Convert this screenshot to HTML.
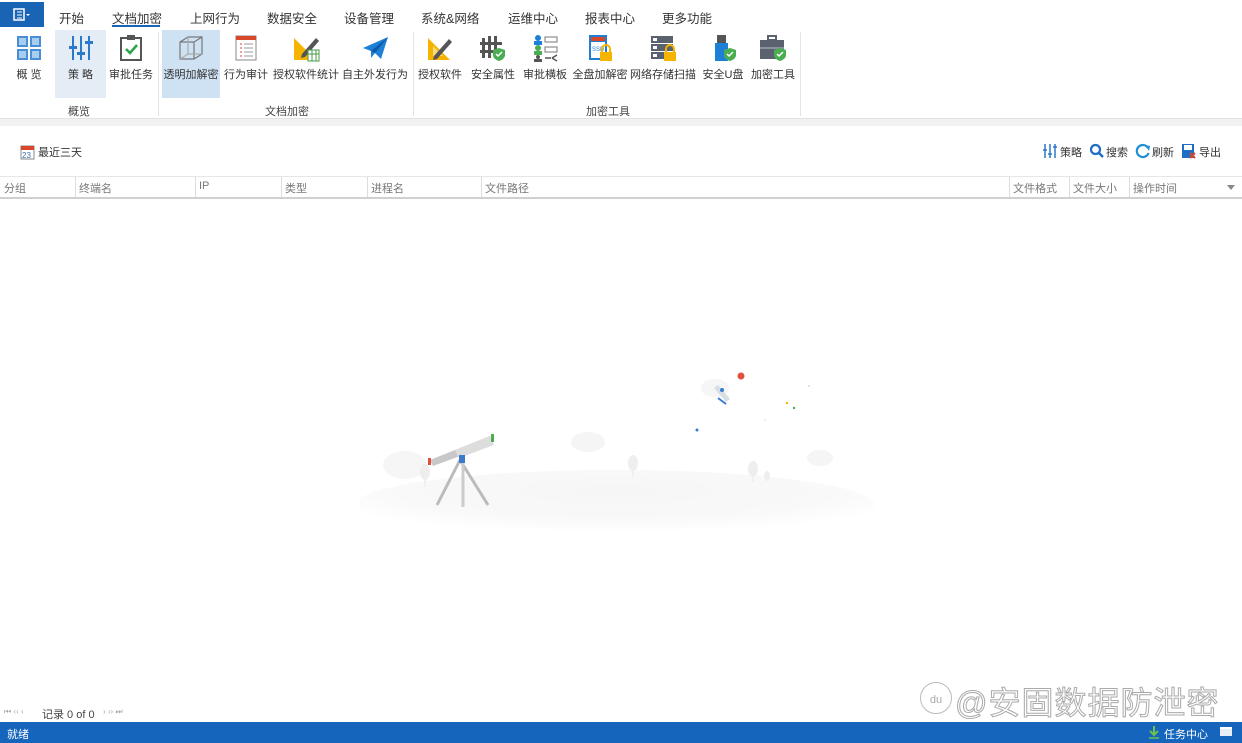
<!DOCTYPE html>
<html><head><meta charset="utf-8"><style>
*{margin:0;padding:0;box-sizing:border-box}
body{width:1242px;height:743px;position:relative;background:#fff;font-family:"Liberation Sans","Noto Sans CJK SC",sans-serif;font-size:12px;color:#333;overflow:hidden}
.a{position:absolute;white-space:nowrap}
.tab{position:absolute;top:8px;font-size:12.5px;color:#333}
.it{position:absolute;top:30px;height:68px;text-align:center;font-size:11px;color:#333}
.it svg{position:absolute;top:4px;left:50%;margin-left:-14px}
.it span{position:absolute;top:36px;left:0;right:0;text-align:center}
.sep{position:absolute;top:32px;width:1px;height:84px;background:#e3e3e3}
.gl{position:absolute;top:103px;font-size:11px;color:#444}
.col{position:absolute;top:180px;font-size:11px;color:#777}
.cs{position:absolute;top:177px;width:1px;height:20px;background:#ddd}
</style></head><body>
<div class="a" style="left:0;top:2px;width:44px;height:25px;background:#1a64b6"></div>
<svg class="a" style="left:13px;top:8px" width="18" height="14"><rect x="1" y="1" width="10" height="11" fill="none" stroke="#fff" stroke-width="1.5"/><line x1="4" y1="4" x2="9" y2="4" stroke="#fff"/><line x1="4" y1="7" x2="9" y2="7" stroke="#fff"/><line x1="4" y1="10" x2="9" y2="10" stroke="#fff"/><path d="M13 6l2 2 2-2" fill="#fff"/></svg>
<div class="tab" style="left:59px">开始</div>
<div class="tab" style="left:112px">文档加密</div>
<div class="a" style="left:112px;top:25px;width:48px;height:2px;background:#1a64b6"></div>
<div class="tab" style="left:190px">上网行为</div>
<div class="tab" style="left:267px">数据安全</div>
<div class="tab" style="left:344px">设备管理</div>
<div class="tab" style="left:421px">系统&amp;网络</div>
<div class="tab" style="left:508px">运维中心</div>
<div class="tab" style="left:585px">报表中心</div>
<div class="tab" style="left:662px">更多功能</div>
<div class="a" style="left:55px;top:30px;width:51px;height:68px;background:#e4edf6"></div>
<div class="a" style="left:162px;top:30px;width:58px;height:68px;background:#cfe2f4"></div>
<div class="it" style="left:4px;width:50px"><svg width="28" height="28"><g fill="#4a8fd6"><rect x="2" y="2" width="11" height="11"/><rect x="15" y="2" width="11" height="11"/><rect x="2" y="15" width="11" height="11"/><rect x="15" y="15" width="11" height="11"/></g><g fill="#a9cdef"><rect x="4" y="4" width="7" height="7"/><rect x="17" y="4" width="7" height="7"/><rect x="4" y="17" width="7" height="7"/><rect x="17" y="17" width="7" height="7"/></g></svg><span>概 览</span></div>
<div class="it" style="left:55px;width:51px"><svg width="28" height="28"><g stroke="#2a78c8" stroke-width="2"><line x1="6" y1="2" x2="6" y2="26"/><line x1="14" y1="2" x2="14" y2="26"/><line x1="22" y1="2" x2="22" y2="26"/></g><g fill="#2a78c8"><rect x="2" y="12" width="8" height="3"/><rect x="10" y="18" width="8" height="3"/><rect x="18" y="7" width="8" height="3"/></g></svg><span>策 略</span></div>
<div class="it" style="left:106px;width:50px"><svg width="28" height="28"><rect x="4" y="4" width="20" height="22" fill="none" stroke="#555" stroke-width="2"/><rect x="10" y="1" width="8" height="5" fill="#555"/><path d="M9 15l4 4 7-8" fill="none" stroke="#2aa44a" stroke-width="2.5"/></svg><span>审批任务</span></div>
<div class="sep" style="left:158px"></div>
<div class="it" style="left:162px;width:58px"><svg width="28" height="28"><g fill="none" stroke="#777" stroke-width="1.2"><path d="M3 8l8-5h14v17l-8 5H3z"/><path d="M3 8h14v17M17 8l8-5"/><path d="M3 25l8-5h14M11 3v17" stroke="#aaa"/></g></svg><span>透明加解密</span></div>
<div class="it" style="left:222px;width:48px"><svg width="28" height="28"><rect x="4" y="2" width="20" height="24" fill="#fff" stroke="#888"/><rect x="4" y="2" width="20" height="4" fill="#d9472b"/><g stroke="#d9472b"><line x1="8" y1="10" x2="10" y2="10"/><line x1="8" y1="14" x2="10" y2="14"/><line x1="8" y1="18" x2="10" y2="18"/><line x1="8" y1="22" x2="10" y2="22"/></g><g stroke="#999"><line x1="12" y1="10" x2="21" y2="10"/><line x1="12" y1="14" x2="21" y2="14"/><line x1="12" y1="18" x2="21" y2="18"/><line x1="12" y1="22" x2="21" y2="22"/></g></svg><span>行为审计</span></div>
<div class="it" style="left:272px;width:68px"><svg width="28" height="28"><path d="M2 4v22h22z" fill="#f5b400"/><path d="M10 20l14-16 3 3-14 16-4 1z" fill="#555"/><rect x="16" y="16" width="11" height="11" fill="#fff" stroke="#4a9a4a"/><path d="M16 20h11M20 16v11M24 16v11" stroke="#4a9a4a"/></svg><span>授权软件统计</span></div>
<div class="it" style="left:342px;width:66px"><svg width="28" height="28"><path d="M2 14L27 3 20 25l-6-6-4 5v-7z" fill="#1e7fd6"/><path d="M10 17L27 3 14 19" fill="#0d5aa8"/></svg><span>自主外发行为</span></div>
<div class="sep" style="left:413px"></div>
<div class="it" style="left:416px;width:48px"><svg width="28" height="28"><path d="M2 4v22h22z" fill="#f5b400"/><path d="M7 12v10h10z" fill="#fff" opacity=".5"/><path d="M8 22l15-17 3 3-15 17-4 1z" fill="#555"/></svg><span>授权软件</span></div>
<div class="it" style="left:468px;width:50px"><svg width="28" height="28"><g fill="#555"><rect x="3" y="4" width="3" height="20"/><rect x="9" y="2" width="3" height="22"/><rect x="15" y="2" width="3" height="22"/><rect x="1" y="8" width="22" height="3"/><rect x="1" y="16" width="22" height="3"/></g><path d="M20 14l6 2v5c0 3-3 5-6 6-3-1-6-3-6-6v-5z" fill="#4aad52"/><path d="M17 20l2 2 4-4" stroke="#fff" fill="none" stroke-width="1.5"/></svg><span>安全属性</span></div>
<div class="it" style="left:521px;width:48px"><svg width="28" height="28"><circle cx="7" cy="4" r="3" fill="#1e7fd6"/><rect x="3" y="7" width="8" height="4" fill="#1e7fd6"/><circle cx="7" cy="14" r="3" fill="#4aad52"/><rect x="3" y="17" width="8" height="4" fill="#4aad52"/><circle cx="7" cy="23" r="2" fill="#555"/><rect x="3" y="25" width="8" height="3" fill="#555"/><g fill="none" stroke="#777"><rect x="14" y="3" width="12" height="5"/><rect x="14" y="13" width="12" height="5"/></g><path d="M14 24h6M21 24l5-3M21 24l5 3" stroke="#555" stroke-width="1.5"/></svg><span>审批横板</span></div>
<div class="it" style="left:572px;width:56px"><svg width="28" height="28"><rect x="3" y="1" width="18" height="25" fill="#1e7fd6"/><rect x="5" y="3" width="14" height="4" fill="#d9472b"/><rect x="5" y="8" width="14" height="16" fill="#fff"/><text x="6" y="17" font-size="6" fill="#1e7fd6" font-family="Liberation Sans">SSD</text><rect x="14" y="18" width="12" height="9" fill="#f5b400"/><path d="M16 18v-3a4 4 0 018 0v3" fill="none" stroke="#f5b400" stroke-width="2"/></svg><span>全盘加解密</span></div>
<div class="it" style="left:630px;width:66px"><svg width="28" height="28"><g fill="#5a6270"><rect x="2" y="2" width="22" height="7"/><rect x="2" y="10" width="22" height="7"/><rect x="2" y="18" width="22" height="7"/></g><g fill="#fff"><rect x="4" y="4" width="4" height="3"/><rect x="4" y="12" width="4" height="3"/><rect x="4" y="20" width="4" height="3"/></g><rect x="15" y="18" width="12" height="9" fill="#f5b400"/><path d="M17 18v-3a4 4 0 018 0v3" fill="none" stroke="#f5b400" stroke-width="2"/></svg><span>网络存储扫描</span></div>
<div class="it" style="left:700px;width:46px"><svg width="28" height="28"><rect x="8" y="1" width="9" height="8" fill="#555"/><rect x="6" y="9" width="13" height="18" fill="#1e7fd6"/><path d="M21 14l6 2v5c0 3-3 5-6 6-3-1-6-3-6-6v-5z" fill="#4aad52"/><path d="M18 20l2 2 4-4" stroke="#fff" fill="none" stroke-width="1.5"/></svg><span>安全U盘</span></div>
<div class="it" style="left:749px;width:48px"><svg width="28" height="28"><rect x="9" y="2" width="8" height="4" fill="none" stroke="#5a6270" stroke-width="2"/><rect x="1" y="6" width="24" height="19" fill="#5a6270"/><rect x="1" y="13" width="24" height="2" fill="#8a919c"/><path d="M21 14l6 2v5c0 3-3 5-6 6-3-1-6-3-6-6v-5z" fill="#4aad52"/><path d="M18 20l2 2 4-4" stroke="#fff" fill="none" stroke-width="1.5"/></svg><span>加密工具</span></div>
<div class="sep" style="left:800px"></div>
<div class="gl" style="left:68px">概览</div>
<div class="gl" style="left:265px">文档加密</div>
<div class="gl" style="left:586px">加密工具</div>
<div class="a" style="left:0;top:118px;width:1242px;height:8px;background:#f2f2f2;border-top:1px solid #e2e2e2"></div>
<svg class="a" style="left:20px;top:144px" width="16" height="16"><rect x="1" y="2" width="13" height="13" fill="#fff" stroke="#888"/><rect x="1" y="2" width="13" height="4" fill="#d9472b"/><text x="2" y="14" font-size="8" fill="#3a6fb0" font-family="Liberation Sans">23</text></svg>
<div class="a" style="left:38px;top:144px;font-size:11px">最近三天</div>
<svg class="a" style="left:1042px;top:143px" width="16" height="16"><g stroke="#2a78c8" stroke-width="1.5"><line x1="3" y1="1" x2="3" y2="15"/><line x1="8" y1="1" x2="8" y2="15"/><line x1="13" y1="1" x2="13" y2="15"/><line x1="1" y1="7" x2="5" y2="7"/><line x1="6" y1="11" x2="10" y2="11"/><line x1="11" y1="4" x2="15" y2="4"/></g></svg>
<div class="a" style="left:1060px;top:144px;font-size:11px">策略</div>
<svg class="a" style="left:1089px;top:143px" width="16" height="16"><circle cx="6.5" cy="6.5" r="4.5" fill="none" stroke="#1e6fc4" stroke-width="2.2"/><line x1="10" y1="10" x2="14" y2="14" stroke="#1e6fc4" stroke-width="2.5"/></svg>
<div class="a" style="left:1106px;top:144px;font-size:11px">搜索</div>
<svg class="a" style="left:1135px;top:143px" width="16" height="16"><path d="M13 5A6 6 0 1 0 13.5 10" fill="none" stroke="#1e90d6" stroke-width="2.2"/><path d="M10 2l5 1-1 5z" fill="#1e90d6"/></svg>
<div class="a" style="left:1152px;top:144px;font-size:11px">刷新</div>
<svg class="a" style="left:1181px;top:143px" width="16" height="16"><rect x="1" y="1" width="12" height="14" fill="#1e6fc4"/><rect x="3" y="2" width="8" height="5" fill="#fff"/><path d="M9 10l5 5M9 15l5-5" stroke="#d9472b" stroke-width="2"/></svg>
<div class="a" style="left:1199px;top:144px;font-size:11px">导出</div>
<div class="a" style="left:0;top:176px;width:1242px;height:1px;background:#e6e6e6"></div>
<div class="a" style="left:0;top:197px;width:1242px;height:2px;background:#d0d0d0"></div>
<div class="col" style="left:4px">分组</div>
<div class="cs" style="left:75px"></div><div class="col" style="left:79px">终端名</div>
<div class="cs" style="left:195px"></div><div class="col" style="left:199px">IP</div>
<div class="cs" style="left:281px"></div><div class="col" style="left:285px">类型</div>
<div class="cs" style="left:367px"></div><div class="col" style="left:371px">进程名</div>
<div class="cs" style="left:481px"></div><div class="col" style="left:485px">文件路径</div>
<div class="cs" style="left:1009px"></div><div class="col" style="left:1013px">文件格式</div>
<div class="cs" style="left:1069px"></div><div class="col" style="left:1073px">文件大小</div>
<div class="cs" style="left:1129px"></div><div class="col" style="left:1133px">操作时间</div>
<div class="a" style="left:1227px;top:185px;border:4px solid transparent;border-top:5px solid #888"></div>
<svg class="a" style="left:360px;top:360px" width="520" height="170">
<defs><radialGradient id="g" cx="50%" cy="30%" r="60%"><stop offset="0" stop-color="#f6f6f6"/><stop offset="0.7" stop-color="#f9f9f9"/><stop offset="1" stop-color="#fff"/></radialGradient></defs>
<ellipse cx="255" cy="145" rx="260" ry="35" fill="url(#g)"/>
<ellipse cx="45" cy="105" rx="22" ry="14" fill="#f6f6f6"/>
<ellipse cx="228" cy="82" rx="17" ry="10" fill="#f5f5f5"/>
<ellipse cx="460" cy="98" rx="13" ry="8" fill="#f5f5f5"/>
<ellipse cx="355" cy="28" rx="14" ry="9" fill="#f6f6f6"/>
<ellipse cx="65" cy="112" rx="5" ry="8" fill="#eee"/><line x1="65" y1="118" x2="65" y2="127" stroke="#eee" stroke-width="1.5"/>
<ellipse cx="273" cy="103" rx="5" ry="8" fill="#eee"/><line x1="273" y1="108" x2="273" y2="117" stroke="#eee" stroke-width="1.5"/>
<ellipse cx="393" cy="109" rx="5" ry="8" fill="#eee"/><line x1="393" y1="114" x2="393" y2="122" stroke="#eee" stroke-width="1.5"/>
<ellipse cx="407" cy="116" rx="3" ry="5" fill="#eee"/>
<g stroke="#bbb" stroke-width="3"><line x1="100" y1="100" x2="77" y2="145"/><line x1="100" y1="100" x2="128" y2="145"/><line x1="103" y1="100" x2="103" y2="147" stroke="#ccc"/></g>
<path d="M70 100l60-24 3 8-60 22z" fill="#c8c8c8"/>
<path d="M95 90l35-14 4 9-35 13z" fill="#ddd"/>
<rect x="99" y="95" width="6" height="8" fill="#3a7bd0"/>
<rect x="68" y="98" width="3" height="7" fill="#e0503a"/>
<rect x="131" y="74" width="3" height="8" fill="#4aad52"/>
<circle cx="381" cy="16" r="3.5" fill="#e0503a"/>
<path d="M358 25l12 14-4 3-12-14z" fill="#d8dde6"/><circle cx="362" cy="30" r="2" fill="#3a7bd0"/>
<line x1="358" y1="38" x2="366" y2="44" stroke="#3a7bd0" stroke-width="2"/>
<circle cx="337" cy="70" r="1.5" fill="#3a7bd0"/><circle cx="434" cy="48" r="1.2" fill="#4aad52"/><circle cx="427" cy="43" r="1.2" fill="#f5b400"/><circle cx="405" cy="60" r="1.2" fill="#eee"/><circle cx="449" cy="26" r="1" fill="#ddd"/>
</svg>
<div class="a" style="left:920px;top:682px;width:32px;height:32px;border:1px solid #bbb;border-radius:50%;font-size:11px;color:#aaa;text-align:center;line-height:34px">du</div>
<div class="a" style="left:955px;top:678px;font-size:32px;color:#fff;-webkit-text-stroke:1px #aaa;letter-spacing:1px">@安固数据防泄密</div>
<div class="a" style="left:4px;top:707px;font-size:8px;color:#aaa">⏮ ‹‹ ‹</div>
<div class="a" style="left:42px;top:706px;font-size:11px;color:#444">记录 0 of 0</div>
<div class="a" style="left:103px;top:707px;font-size:8px;color:#aaa">› ›› ⏭</div>
<div class="a" style="left:0;top:722px;width:1242px;height:21px;background:#1565bd"></div>
<div class="a" style="left:7px;top:726px;font-size:11px;color:#fff">就绪</div>
<svg class="a" style="left:1148px;top:725px" width="12" height="14"><path d="M6 1v9M2 6l4 4 4-4" stroke="#6cc24a" stroke-width="2" fill="none"/><line x1="1" y1="13" x2="11" y2="13" stroke="#6cc24a" stroke-width="1.5"/></svg>
<div class="a" style="left:1164px;top:726px;font-size:11px;color:#fff">任务中心</div>
<div class="a" style="left:1220px;top:727px;width:12px;height:9px;background:#e8eef6;border-top:2px solid #fff"></div>
</body></html>
